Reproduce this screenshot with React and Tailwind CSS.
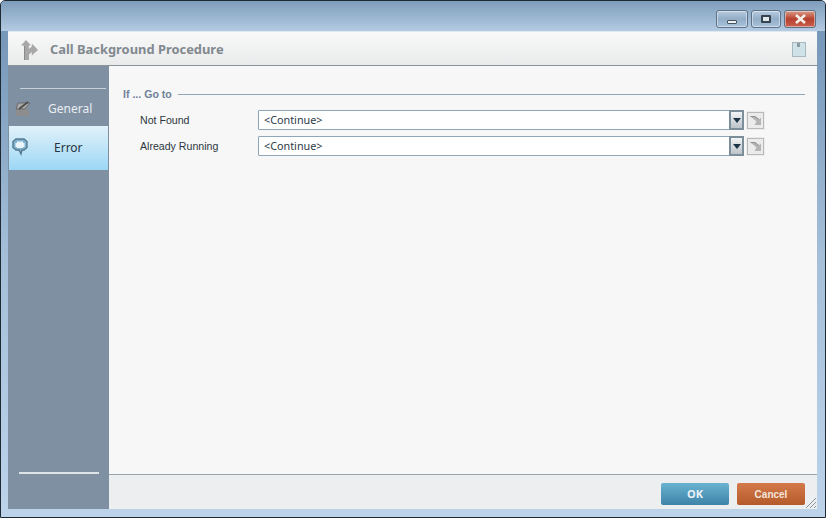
const font = "font-['Noto_Sans','Open_Sans',sans-serif]";
const label = "font-['Liberation_Sans',sans-serif]";

function WinBtn({ className, children }) {
  return (
    <div className={`h-[18px] rounded-[3px] border border-[#5d7187] shadow-[inset_0_0_0_1px_rgba(255,255,255,0.45)] flex items-center justify-center ${className}`}>
      {children}
    </div>
  );
}

function Combo() {
  return (
    <div className="flex items-center ml-[118px] flex-1">
      <div className="flex-1 h-[20px] bg-white border border-[#8fa5b8] flex items-center pl-[5px] text-[10.8px] text-[#2c3a48] rounded-[1px]">
        &lt;Continue&gt;
        <div className="ml-auto w-[15px] h-[20px] bg-gradient-to-b from-[#f3f4f5] to-[#bcc4ca] border-2 border-[#7d8e9b] flex items-center justify-center -mr-px">
          <svg width="8" height="5" viewBox="0 0 8 5"><path d="M0 0h8L4 5z" fill="#1d3346" /></svg>
        </div>
      </div>
      <div className="ml-[3px] w-[17px] h-[17px] bg-[#ebebeb] border border-[#b9b9b9] shadow-[0_0_0_1px_#ececec] flex items-center justify-center">
        <svg width="13" height="11" viewBox="0 0 13 11">
          <path d="M12 10V2.5L10 4.5 6 1.5H1.5L7.5 6.5 5.5 10z" fill="#b4b4b4" />
          <path d="M1.5 1.5H6l4 3" stroke="#8f8f8f" fill="none" />
        </svg>
      </div>
    </div>
  );
}

function Row({ text }) {
  return (
    <div className="flex items-center h-[20px]">
      <span className={`w-0 pt-px whitespace-nowrap text-[10.6px] text-[#2c3640] ${label}`}>{text}</span>
      <Combo />
    </div>
  );
}

export default function App() {
  return (
    <div className={`w-[826px] h-[518px] flex flex-col overflow-hidden rounded-t-[5px] border border-[#1e2a33] bg-gradient-to-b from-[#6f92b4] via-[#a5bfd9] to-[#bcd3ea] ${font}`}>
      <div className="h-[30px] shrink-0 flex justify-end items-start pt-[9px] pr-[9px] gap-[3px] bg-gradient-to-b from-[#7e9dbb] to-[#b4cbe2]">
        <WinBtn className="w-[32px] bg-gradient-to-b from-[#b6cbe0] via-[#93adc7] to-[#a9c3dc]">
          <div className="w-[10px] h-[4px] mt-[5px] bg-[#eef2f5] border border-[#44525e] rounded-[1px]" />
        </WinBtn>
        <WinBtn className="w-[30px] bg-gradient-to-b from-[#b6cbe0] via-[#93adc7] to-[#a9c3dc]">
          <div className="w-[10px] h-[8px] bg-[#dfe6ec] border-2 border-[#35434f] rounded-[1px]" />
        </WinBtn>
        <WinBtn className="w-[32px] bg-gradient-to-b from-[#d99a88] via-[#b6402e] to-[#c9604e]">
          <svg width="13" height="10" viewBox="0 0 13 10"><path d="M2 1l9 8M11 1L2 9" stroke="#f4efe9" strokeWidth="2.6" /></svg>
        </WinBtn>
      </div>

      <div className="flex-1 ml-[7px] mr-[8px] mb-[8px] flex flex-col min-h-0 bg-[#f7f7f7]">
        <div className="h-[35px] shrink-0 flex items-center pt-[2px] border-b border-[#8b9299] bg-gradient-to-b from-[#f9f9f9] to-[#e9eaeb] border-t border-t-[#dfe8f0]">
          <svg className="ml-[11px]" width="19" height="20" viewBox="0 0 19 20">
            <path d="M7 0l5 5.5h-2.2V9l3-2.5V3.5L19 10l-6.2 5.5V12L10 14.5V20H5.5V8.5L4.5 5.5H2z" fill="#a8a8a8" />
            <path d="M5.5 20V6" stroke="#8a8a8a" />
          </svg>
          <span className="ml-[12px] text-[12.9px] font-bold text-[#81898f]">Call Background Procedure</span>
          <div className="ml-auto mr-[11px] w-[14px] h-[15px] bg-[#cfe2e8] border border-[#a8b8bf] relative">
            <div className="absolute top-0 left-[4px] w-[3px] h-[4px] bg-[#8d9ca4]" />
          </div>
        </div>

        <div className="flex-1 flex min-h-0">
          <div className="w-[101px] shrink-0 bg-[#7f90a3] flex flex-col pt-[22px]">
            <div className="h-px ml-[12px] mr-[3px] bg-[#c8d0d8]" />
            <div className="h-[37px] flex items-center pt-[2px]">
              <svg className="ml-[7px]" width="16" height="17" viewBox="0 0 16 17">
                <path d="M1 9h13v7H1z" fill="#8d8d8d" />
                <path d="M3 3h12l-5 6H1z" fill="#a8a8a8" stroke="#6a6a6a" />
                <path d="M4 9l9-7" stroke="#4a4a4a" strokeWidth="1.6" />
              </svg>
              <span className="ml-[17px] text-[12px] text-[#e9edf0]">General</span>
            </div>
            <div className="h-[44px] mx-[1px] flex items-center bg-gradient-to-b from-[#e0f1f9] to-[#9cd7f5]">
              <svg className="ml-[2px] mb-[3px]" width="18" height="19" viewBox="0 0 18 19">
                <path d="M5 2h8l3 2.5v6L13 13h-2l-1 4-2-4H5l-3-2.5v-6z" fill="#7fb3d0" stroke="#56788f" strokeWidth="1.4" />
                <path d="M6 4.5h6v1.5h1.5v4H12v1H6v-1H4.5V6H6z" fill="#eaf5fa" />
              </svg>
              <span className="ml-[25px] text-[12px] text-[#26343f]">Error</span>
            </div>
            <div className="flex-1" />
            <div className="h-[2px] mx-[11px] mb-[35px] w-[80px] bg-[#dde3e8]" />
          </div>

          <div className="flex-1 flex flex-col min-w-0">
            <div className="flex-1 pl-[14px] pr-[12px] pt-[21px]">
              <div className="flex items-center h-[14px]">
                <span className={`pt-[2px] text-[10.6px] font-bold text-[#6f8299] ${label}`}>If ... Go to</span>
                <div className="flex-1 h-px ml-[6px] bg-[#93a7bb]" />
              </div>
              <div className="pl-[17px] pr-[41px] mt-[9px] flex flex-col gap-[6px]">
                <Row text="Not Found" />
                <Row text="Already Running" />
              </div>
            </div>
            <div className="h-[35px] shrink-0 border-t border-[#9aa4ad] bg-[#eceef0] relative flex justify-end items-start pt-[8px] pr-[12px] gap-[8px]">
              <button className="w-[68px] h-[22px] rounded-[2px] bg-gradient-to-b from-[#69b3d0] to-[#3e83a8] text-[11px] font-bold text-[#e8f2f7]">OK</button>
              <button className={`w-[68px] h-[22px] rounded-[2px] bg-gradient-to-b from-[#d4794a] to-[#b55a2a] text-[10px] font-bold text-[#f4e6dc] ${label}`}>Cancel</button>
              <svg className="absolute right-0 bottom-0" width="12" height="12" viewBox="0 0 12 12">
                <path d="M11 1L1 11M11 5L5 11M11 9L9 11" stroke="#8a949c" />
              </svg>
            </div>
          </div>
        </div>
      </div>
    </div>
  );
}
